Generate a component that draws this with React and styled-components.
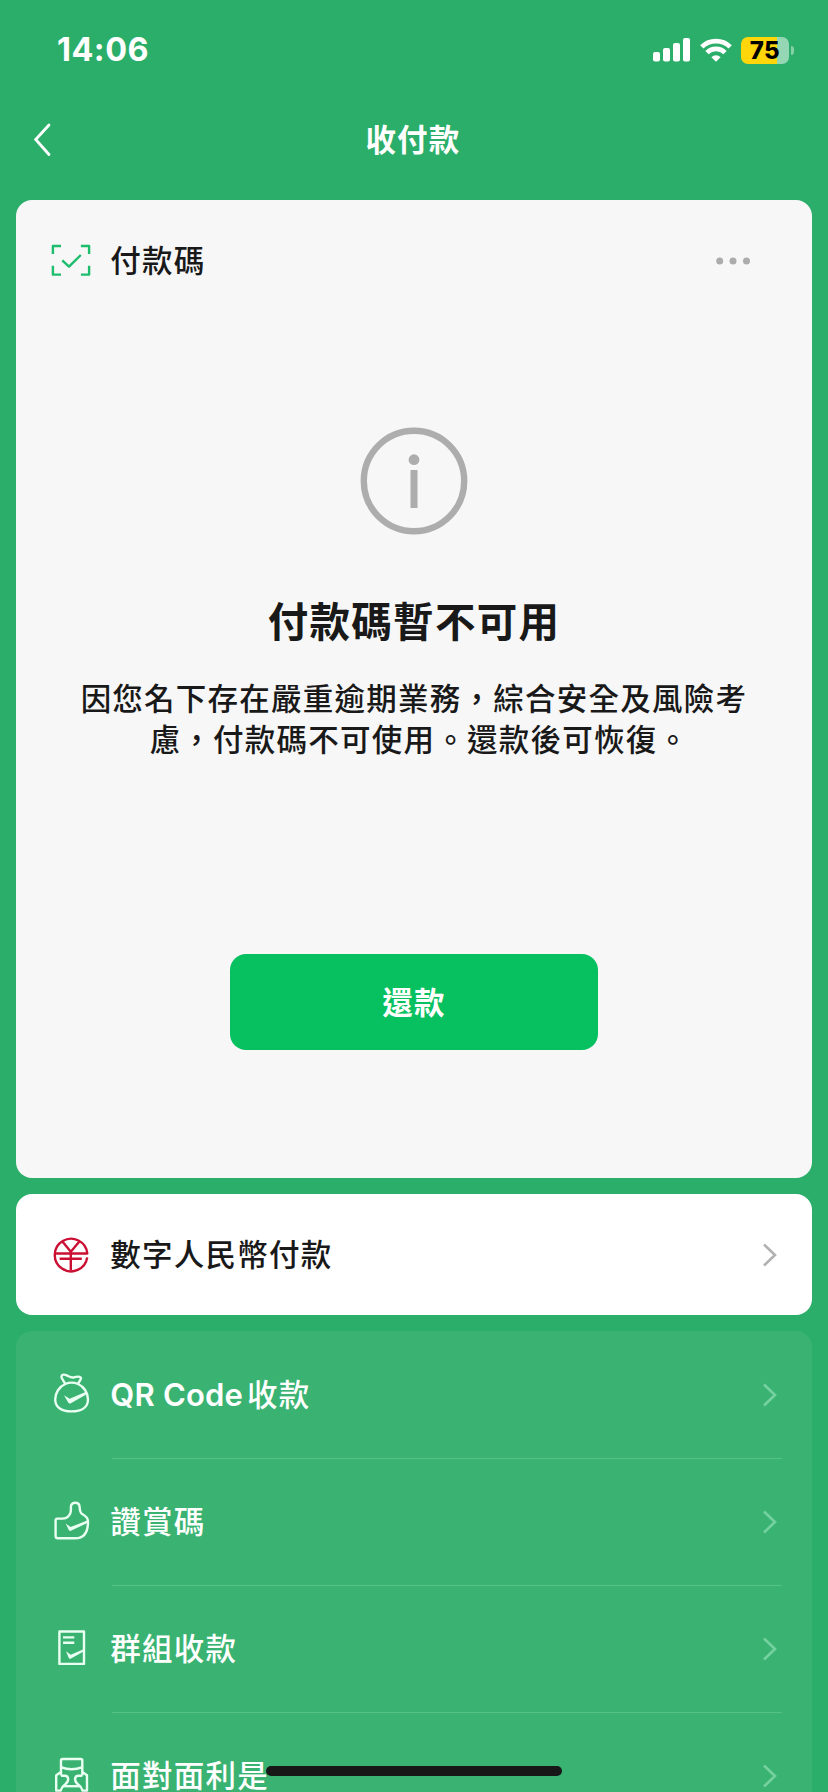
import React from 'react';
import styled, { createGlobalStyle } from 'styled-components';

const GlobalStyle = createGlobalStyle`
  * {
    box-sizing: border-box;
  }

  html, body {
    margin: 0;
    background-color: #2bae69;
  }

  body {
    font-family: Inter, "Noto Sans CJK TC", sans-serif;
    overflow: hidden;
  }
`;

const Screen = styled.div`
  position: relative;
  display: flex;
  flex-direction: column;
  width: 828px;
  height: 1792px;
  overflow: hidden;
  background-color: #2bae69;
`;

/* Status bar */
const StatusBar = styled.header`
  display: flex;
  justify-content: space-between;
  align-items: center;
  height: 80px;
  padding: 20px 34px 0 57px;
  flex-shrink: 0;
`;

const Clock = styled.span`
  font-size: 32.4px;
  line-height: 40px;
  font-weight: 750;
  letter-spacing: 0.5px;
  color: #fff;
`;

const StatusIcons = styled.div`
  display: flex;
  align-items: center;
  gap: 9.5px;
`;

const Battery = styled.div`
  display: flex;
  align-items: center;
  gap: 2px;
`;

const BatteryBody = styled.div`
  display: flex;
  align-items: center;
  justify-content: center;
  width: 48px;
  height: 27px;
  border-radius: 7px;
  background: linear-gradient(to right, #ffd60a ${(props) => props.$level}%, #95d6b4 ${(props) => props.$level}%);
  font-size: 24px;
  line-height: 27px;
  font-weight: 800;
  letter-spacing: 0.6px;
  color: #000;
`;

const BatteryTip = styled.div`
  width: 3px;
  height: 9px;
  border-radius: 0 4px 4px 0;
  background-color: #86d0a8;
`;

/* Navigation */
const NavBar = styled.nav`
  display: grid;
  grid-template-columns: 60px 1fr 60px;
  align-items: center;
  height: 120px;
  padding: 0 16px;
  flex-shrink: 0;
`;

const BackButton = styled.button`
  display: flex;
  padding: 0 0 0 16px;
  border: none;
  background: none;
  color: #fff;
`;

const Title = styled.h1`
  margin: 0;
  padding-right: 2px;
  font-size: 30.5px;
  line-height: 40px;
  font-weight: 700;
  letter-spacing: 1.25px;
  text-align: center;
  color: #fff;
`;

/* Cards */
const Main = styled.main`
  display: flex;
  flex-direction: column;
  gap: 16px;
  padding: 0 16px;
`;

const CodeCard = styled.section`
  display: flex;
  flex-direction: column;
  align-items: center;
  height: 978px;
  border-radius: 16px;
  background-color: #f7f7f7;
  color: #191919;
`;

const CodeHeader = styled.div`
  display: flex;
  align-items: center;
  align-self: stretch;
  height: 122px;
  padding: 0 61px 0 35px;
`;

const Label = styled.span`
  flex: 1;
  margin-left: 19.3px;
  font-size: 30.5px;
  line-height: 32px;
  font-weight: 500;
  letter-spacing: 1.25px;
  color: ${(props) => props.$color || '#191919'};
`;

const Latin = styled.span`
  margin-right: 4px;
  font-size: 31px;
  font-weight: 600;
  letter-spacing: 0.2px;
`;

const InfoIcon = styled.svg`
  margin-top: 104px;
`;

const Heading = styled.h2`
  margin: 59px 0 0;
  font-size: 40.5px;
  line-height: 56px;
  font-weight: 700;
  letter-spacing: 1.3px;
`;

const Description = styled.p`
  width: 670px;
  margin: 27px 0 0;
  font-size: 30.5px;
  line-height: 41px;
  font-weight: 500;
  letter-spacing: 1.25px;
  text-align: center;
`;

/* The last line makes up for the empty side of its closing full stop */
const Line = styled.span`
  display: block;
  padding-left: ${(props) => (props.$last ? '11px' : 0)};
`;

const RepayButton = styled.button`
  width: 368px;
  height: 96px;
  margin-top: 194px;
  padding: 0 0 3px;
  border: none;
  border-radius: 16px;
  background-color: #07c160;
  font-family: inherit;
  font-size: 30.5px;
  font-weight: 700;
  letter-spacing: 1.25px;
  color: #fff;
`;

const LinkCard = styled.section`
  display: flex;
  align-items: center;
  height: 121px;
  padding: 0 35px;
  border-radius: 16px;
  background-color: #fff;
`;

const List = styled.ul`
  margin: 0;
  padding: 0;
  border-radius: 16px;
  background-color: #3ab372;
  list-style: none;
`;

const ListItem = styled.li`
  display: flex;
  align-items: center;
  height: 127px;
  padding: 0 35px 2px;
  background: linear-gradient(#55c187, #55c187) 96px 100% / 670px 1px no-repeat;

  &:first-child {
    height: 128px;
    padding-bottom: 1px;
  }
`;

const Icon = styled.svg`
  width: 40px;
  height: 40px;
  overflow: visible;
  flex-shrink: 0;
  fill: none;
  stroke: ${(props) => props.$color || '#e9fff2'};
  stroke-width: 2.4;
  stroke-linejoin: round;
`;

const HomeIndicator = styled.div`
  position: absolute;
  left: 266px;
  bottom: 16px;
  width: 296px;
  height: 10px;
  border-radius: 5px;
  background-color: #171717;
`;

const Chevron = ({ color }) => (
  <svg width="15" height="24" viewBox="0 0 15 24" fill="none" stroke={color} strokeWidth="2.6">
    <path d="M2 1.5 L13 12 L2 22.5" />
  </svg>
);

const SignalIcon = () => (
  <svg width="37" height="24" viewBox="0 0 37 24" fill="#fff">
    <rect x="0" y="14" width="7" height="9.5" rx="2" />
    <rect x="10" y="10" width="7" height="13.5" rx="2" />
    <rect x="20" y="5" width="7" height="18.5" rx="2" />
    <rect x="30" y="0" width="7" height="23.5" rx="2" />
  </svg>
);

const WifiIcon = () => (
  <svg width="32" height="24" viewBox="0 0 32 24" fill="none" stroke="#fff" strokeWidth="4.8">
    <path d="M1.8 8.9 A20.3 20.3 0 0 1 30.2 8.9" />
    <path d="M7 14.6 A12.8 12.8 0 0 1 25 14.6" />
    <path d="M16 23.8 L11.4 19.2 A6.6 6.6 0 0 1 20.6 19.2 Z" fill="#fff" stroke="none" />
  </svg>
);

const CodeIcon = () => (
  <Icon viewBox="0 0 40 40" $color="#1cbd6c">
    <path d="M1.9 13 V5 H10 M29.9 5 H38.1 V13 M38.1 24.8 V33.6 H29.9 M10 33.6 H1.9 V24.8" />
    <path d="M11.3 19.3 L18 25.6 L29.8 14" />
  </Icon>
);

const YuanIcon = () => (
  <Icon viewBox="0 0 40 40" $color="#cb1133">
    <path d="M36.2 22.4 A16.3 16.3 0 1 1 36.3 18.5 H3.7" />
    <path d="M11.4 6.5 L19.8 16.8 L28.4 6.5 M19.8 16.8 V35.5 M8.6 23.8 H30.8" />
  </Icon>
);

const BagIcon = () => (
  <Icon viewBox="0 0 40 40">
    <path d="M14.3 9 C12.8 5.5 10.4 4 10.4 1.6 C10.8 -1 13.5 -.6 15.8 .4 C18.2 1.6 20.5 3.2 23 2.4 C25.5 1.5 28.3 1.2 30 2.8 C30.5 4.6 28 6.3 27 9" />
    <path d="M14.3 9 C18.2 7.3 23 7.3 27 9 C33 11.5 37 18 37 24.5 C37 32 31 36.4 20.6 36.4 C10 36.4 4.2 32 4.2 24.5 C4.2 18 8.2 11.5 14.3 9 Z" />
    <path d="M13 20.2 L18.7 23.8 L35.6 16.6 L36.6 18.8 L19.4 28.4 Q18 29 17.2 27.6 Z" fill="#e9fff2" stroke="none" />
  </Icon>
);

const ThumbIcon = () => (
  <Icon viewBox="0 0 40 40">
    <path d="M6.4 16.6 H11.5 C16 16.6 19.8 13.4 19.9 8.5 V4.8 C19.9 -.6 28.3 -.6 28.6 4.8 C28.8 8.2 29 10.6 30.8 11.8 C35 14 37 15.8 37 19.5 C37 30.5 33.5 36.3 24.5 36.3 H6.8 C5.2 36.3 4.6 35.4 4.6 34 V18.4 Q4.6 16.6 6.4 16.6 Z" />
    <path d="M14.6 21.4 L19.5 25.1 L36.2 18.6 L36.8 20.8 L20.4 28.6 Q18.7 29.4 17.8 27.9 Z" fill="#e9fff2" stroke="none" />
  </Icon>
);

const BillIcon = () => (
  <Icon viewBox="0 0 40 40">
    <path d="M8.4 2.5 H33 V34.9 H8.4 Z M12 8.4 H23.3 M12 13.8 H23.3" />
    <path d="M15 22.2 L19.7 25.8 L32.6 20.2 V22.6 L20 29.6 Q18.6 30.3 17.8 28.9 Z" fill="#e9fff2" stroke="none" />
  </Icon>
);

const PacketIcon = () => (
  <Icon viewBox="0 0 40 40">
    <path d="M10 19.5 V4.5 Q10 3 11.5 3 H29.8 Q31.3 3 31.3 4.5 V19.5 M10 11.2 Q20.6 15.4 31.3 11.2" />
    <path d="M10 16 L5.2 19.2 V34.6 H9.6 Q10.6 31 14 28.6 Q17.2 26 17.2 23 Q16.8 19.8 14 19.8 H10" />
    <path d="M31.3 16 L36 19.2 V34.6 H31.6 Q30.6 31 27.2 28.6 Q24 26 24 23 Q24.4 19.8 27.2 19.8 H31.3" />
    <path d="M12 30.2 H29.2" />
  </Icon>
);

const items = [
  { icon: <BagIcon />, latin: 'QR Code', text: '收款' },
  { icon: <ThumbIcon />, text: '讚賞碼' },
  { icon: <BillIcon />, text: '群組收款' },
  { icon: <PacketIcon />, text: '面對面利是' },
];

const App = () => (
  <Screen>
    <GlobalStyle />
    <StatusBar>
      <Clock>14:06</Clock>
      <StatusIcons>
        <SignalIcon />
        <WifiIcon />
        <Battery>
          <BatteryBody $level={75}>75</BatteryBody>
          <BatteryTip />
        </Battery>
      </StatusIcons>
    </StatusBar>

    <NavBar>
      <BackButton aria-label="返回">
        <svg width="20" height="34" viewBox="0 0 20 34" fill="none" stroke="#fff" strokeWidth="2.8" strokeLinecap="round">
          <path d="M17 2 L3.7 16.5 L17 31.5" />
        </svg>
      </BackButton>
      <Title>收付款</Title>
    </NavBar>

    <Main>
      <CodeCard>
        <CodeHeader>
          <CodeIcon />
          <Label>付款碼</Label>
          <svg width="36" height="8" viewBox="0 0 36 8" fill="#acacac">
            <circle cx="4.7" cy="4" r="3.5" />
            <circle cx="18" cy="4" r="3.5" />
            <circle cx="31.5" cy="4" r="3.5" />
          </svg>
        </CodeHeader>
        <InfoIcon width="110" height="110" viewBox="0 0 110 110" fill="#adadad">
          <circle cx="55" cy="55" r="50.2" fill="none" stroke="#adadad" strokeWidth="6.4" />
          <circle cx="55" cy="33.7" r="5.4" />
          <rect x="51.5" y="44" width="7" height="38" />
        </InfoIcon>
        <Heading>付款碼暫不可用</Heading>
        <Description>
          <Line>因您名下存在嚴重逾期業務，綜合安全及風險考</Line>
          <Line $last>慮，付款碼不可使用。還款後可恢復。</Line>
        </Description>
        <RepayButton>還款</RepayButton>
      </CodeCard>

      <LinkCard>
        <YuanIcon />
        <Label>數字人民幣付款</Label>
        <Chevron color="#b2b2b2" />
      </LinkCard>

      <List>
        {items.map((item) => (
          <ListItem key={item.text}>
            {item.icon}
            <Label $color="#fff">
              {item.latin && <Latin>{item.latin}</Latin>}
              {item.text}
            </Label>
            <Chevron color="#75d19f" />
          </ListItem>
        ))}
      </List>
    </Main>

    <HomeIndicator />
  </Screen>
);

export default App;
